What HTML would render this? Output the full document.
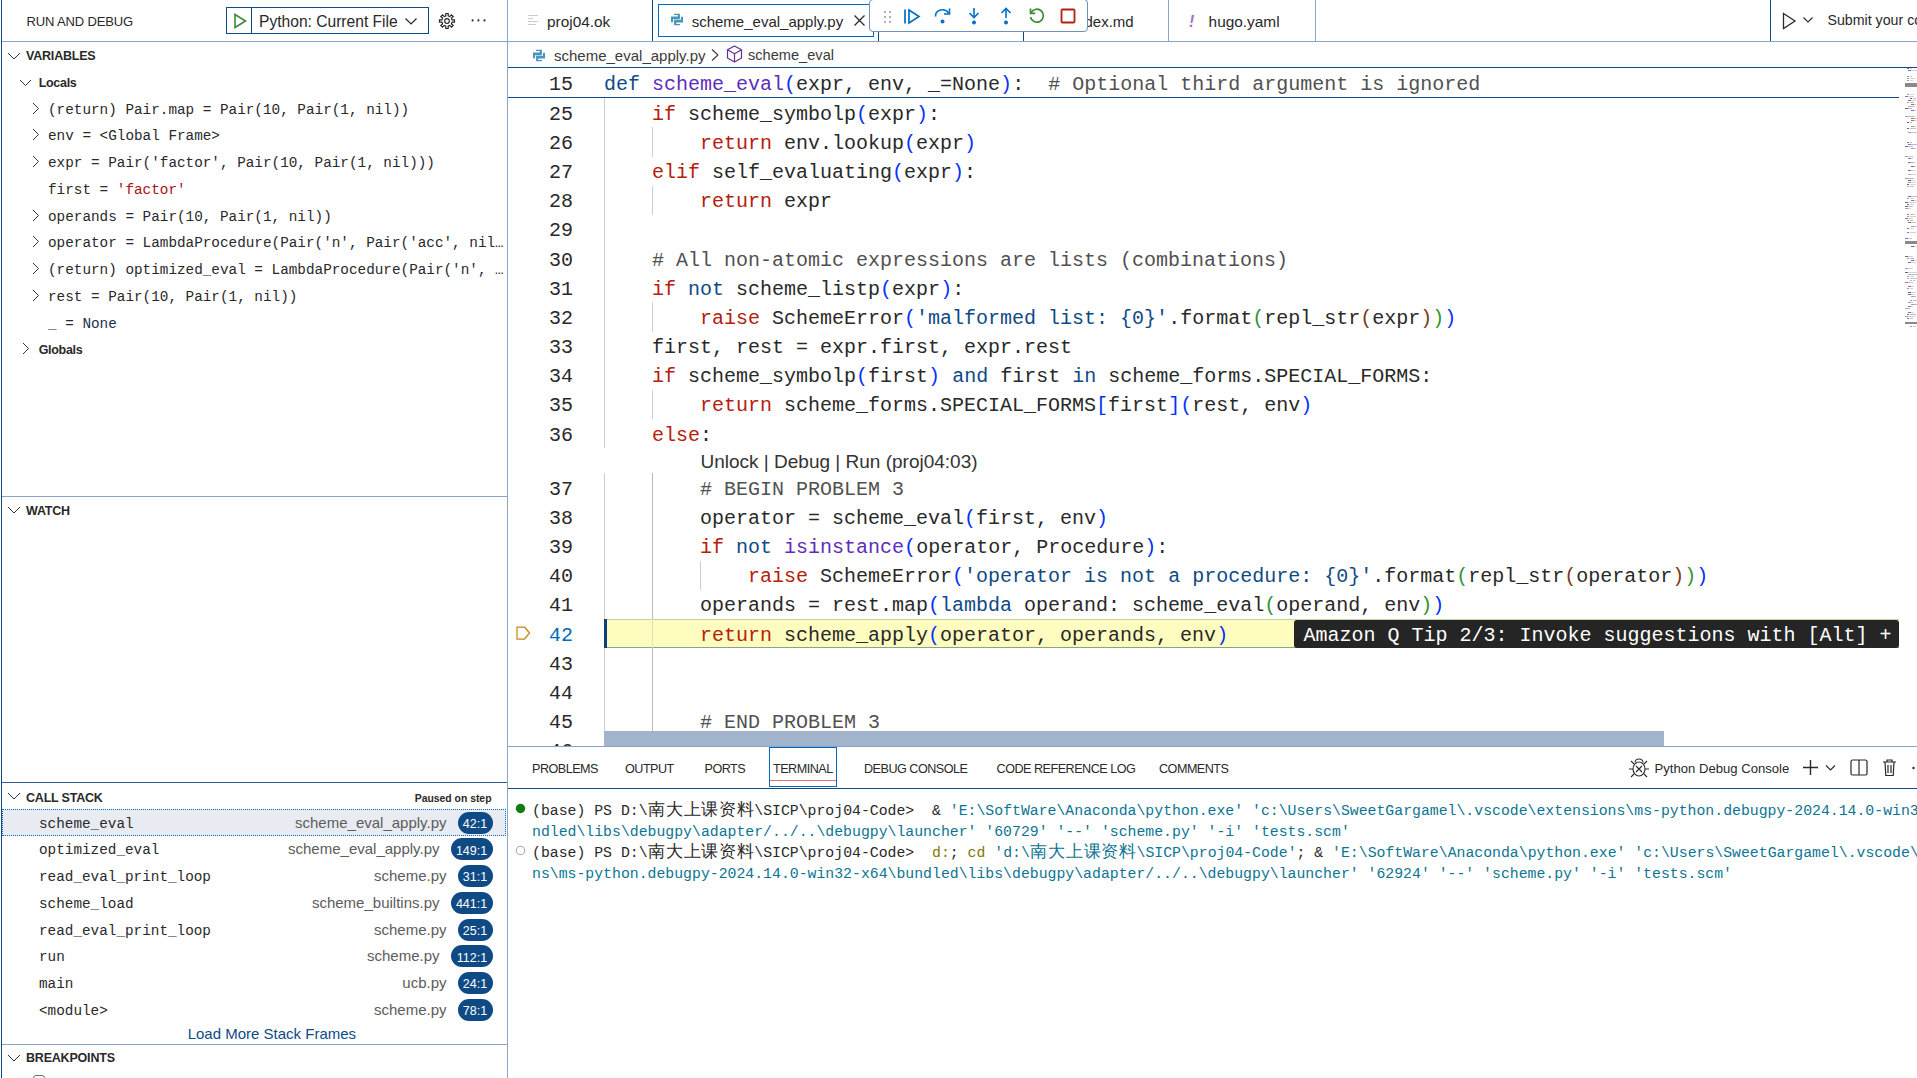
<!DOCTYPE html><html><head><meta charset="utf-8"><style>
html,body{margin:0;padding:0;}
body{width:1917px;height:1078px;overflow:hidden;position:relative;background:#fff;}
.r{position:absolute;}
.t{position:absolute;white-space:pre;}
.s{font-family:"Liberation Sans",sans-serif;}
.m{font-family:"Liberation Mono",monospace;}
</style></head><body>
<div class="r" style="left:1px;top:0px;width:1px;height:1078px;background:#0f4a85;"></div>
<div class="r" style="left:507px;top:0px;width:1px;height:1078px;background:#8aa6c4;"></div>
<div class="r" style="left:2px;top:41px;width:505px;height:1px;background:#8aa6c4;"></div>
<div class="t s" style="top:14.00px;font-size:13px;line-height:15.00px;color:#292929;left:26.50px;letter-spacing:-0.15px;">RUN AND DEBUG</div>
<div class="r" style="left:226px;top:7px;width:203px;height:27px;box-sizing:border-box;border:1px solid #0f4a85;"></div>
<div class="r" style="left:251px;top:8px;width:1px;height:25px;background:#0f4a85;"></div>
<svg class="r" style="left:232px;top:13px;" width="16" height="16" viewBox="0 0 16 16"><path d="M3 1.5 L13.5 8 L3 14.5 Z" fill="none" stroke="#388a34" stroke-width="1.6" stroke-linejoin="miter"/></svg>
<div class="t s" style="top:12.70px;font-size:15.6px;line-height:17.00px;color:#292929;left:259.00px;letter-spacing:0px;">Python: Current File</div>
<svg class="r" style="left:403px;top:13px;" width="16" height="16" viewBox="0 0 16 16"><path d="M2.5 5.5 L8 11 L13.5 5.5" fill="none" stroke="#292929" stroke-width="1.2"/></svg>
<svg class="r" style="left:438.2px;top:11.6px;" width="18" height="18" viewBox="0 0 18 18"><g transform="translate(9,9)" fill="none" stroke="#292929" stroke-width="1.2"><path d="M5.07 -1.13 L7.50 -1.21 L7.50 1.21 L5.07 1.13 L4.39 2.79 L6.16 4.45 L4.45 6.16 L2.79 4.39 L1.13 5.07 L1.21 7.50 L-1.21 7.50 L-1.13 5.07 L-2.79 4.39 L-4.45 6.16 L-6.16 4.45 L-4.39 2.79 L-5.07 1.13 L-7.50 1.21 L-7.50 -1.21 L-5.07 -1.13 L-4.39 -2.79 L-6.16 -4.45 L-4.45 -6.16 L-2.79 -4.39 L-1.13 -5.07 L-1.21 -7.50 L1.21 -7.50 L1.13 -5.07 L2.79 -4.39 L4.45 -6.16 L6.16 -4.45 L4.39 -2.79 Z"/><circle r="2.3"/></g></svg>
<svg class="r" style="left:468px;top:17px;" width="20" height="8" viewBox="0 0 20 8"><circle cx="4.6" cy="3.4" r="1.05" fill="#292929"/><circle cx="10.4" cy="3.4" r="1.05" fill="#292929"/><circle cx="16.5" cy="3.4" r="1.05" fill="#292929"/></svg>
<svg class="r" style="left:7px;top:52.3px;" width="14" height="9" viewBox="0 0 14 9"><path d="M1 1 L7.0 7.0 L13 1" fill="none" stroke="#333333" stroke-width="1.0"/></svg>
<div class="t s" style="top:49.10px;font-size:12.5px;line-height:14.00px;color:#292929;left:26.00px;font-weight:700;letter-spacing:-0.2px;">VARIABLES</div>
<svg class="r" style="left:19px;top:79.2px;" width="13" height="8" viewBox="0 0 13 8"><path d="M1 1 L6.5 6.5 L12 1" fill="none" stroke="#333333" stroke-width="1.0"/></svg>
<div class="t s" style="top:75.85px;font-size:12.5px;line-height:14.00px;color:#292929;left:38.70px;font-weight:700;letter-spacing:-0.3px;">Locals</div>
<svg class="r" style="left:31.8px;top:101.6px;" width="8" height="13" viewBox="0 0 8 13"><path d="M1 1 L6.5 6.5 L1 12" fill="none" stroke="#333333" stroke-width="1.0"/></svg>
<div class="t m" style="top:101.60px;font-size:14.33px;line-height:16.00px;color:#292929;left:48.00px;"><span style="color:#292929">(return) Pair.map = Pair(10, Pair(1, nil))</span></div>
<svg class="r" style="left:31.8px;top:128.35px;" width="8" height="13" viewBox="0 0 8 13"><path d="M1 1 L6.5 6.5 L1 12" fill="none" stroke="#333333" stroke-width="1.0"/></svg>
<div class="t m" style="top:128.35px;font-size:14.33px;line-height:16.00px;color:#292929;left:48.00px;"><span style="color:#292929">env = &lt;Global Frame&gt;</span></div>
<svg class="r" style="left:31.8px;top:155.1px;" width="8" height="13" viewBox="0 0 8 13"><path d="M1 1 L6.5 6.5 L1 12" fill="none" stroke="#333333" stroke-width="1.0"/></svg>
<div class="t m" style="top:155.10px;font-size:14.33px;line-height:16.00px;color:#292929;left:48.00px;"><span style="color:#292929">expr = Pair('factor', Pair(10, Pair(1, nil)))</span></div>
<div class="t m" style="top:181.85px;font-size:14.33px;line-height:16.00px;color:#292929;left:48.00px;"><span style="color:#292929">first = </span><span style="color:#a31515">'factor'</span></div>
<svg class="r" style="left:31.8px;top:208.6px;" width="8" height="13" viewBox="0 0 8 13"><path d="M1 1 L6.5 6.5 L1 12" fill="none" stroke="#333333" stroke-width="1.0"/></svg>
<div class="t m" style="top:208.60px;font-size:14.33px;line-height:16.00px;color:#292929;left:48.00px;"><span style="color:#292929">operands = Pair(10, Pair(1, nil))</span></div>
<svg class="r" style="left:31.8px;top:235.35px;" width="8" height="13" viewBox="0 0 8 13"><path d="M1 1 L6.5 6.5 L1 12" fill="none" stroke="#333333" stroke-width="1.0"/></svg>
<div class="t m" style="top:235.35px;font-size:14.33px;line-height:16.00px;color:#292929;left:48.00px;"><span style="color:#292929">operator = LambdaProcedure(Pair('n', Pair('acc', nil…</span></div>
<svg class="r" style="left:31.8px;top:262.1px;" width="8" height="13" viewBox="0 0 8 13"><path d="M1 1 L6.5 6.5 L1 12" fill="none" stroke="#333333" stroke-width="1.0"/></svg>
<div class="t m" style="top:262.10px;font-size:14.33px;line-height:16.00px;color:#292929;left:48.00px;"><span style="color:#292929">(return) optimized_eval = LambdaProcedure(Pair('n', …</span></div>
<svg class="r" style="left:31.8px;top:288.85px;" width="8" height="13" viewBox="0 0 8 13"><path d="M1 1 L6.5 6.5 L1 12" fill="none" stroke="#333333" stroke-width="1.0"/></svg>
<div class="t m" style="top:288.85px;font-size:14.33px;line-height:16.00px;color:#292929;left:48.00px;"><span style="color:#292929">rest = Pair(10, Pair(1, nil))</span></div>
<div class="t m" style="top:315.60px;font-size:14.33px;line-height:16.00px;color:#292929;left:48.00px;"><span style="color:#292929">_ = </span><span style="color:#1c2f4d">None</span></div>
<svg class="r" style="left:21.5px;top:342.35px;" width="8" height="13" viewBox="0 0 8 13"><path d="M1 1 L6.5 6.5 L1 12" fill="none" stroke="#333333" stroke-width="1.0"/></svg>
<div class="t s" style="top:343.35px;font-size:12.5px;line-height:14.00px;color:#292929;left:38.70px;font-weight:700;letter-spacing:-0.3px;">Globals</div>
<div class="r" style="left:2px;top:496px;width:505px;height:1px;background:#8aa6c4;"></div>
<svg class="r" style="left:7px;top:506.4px;" width="14" height="9" viewBox="0 0 14 9"><path d="M1 1 L7.0 7.0 L13 1" fill="none" stroke="#333333" stroke-width="1.0"/></svg>
<div class="t s" style="top:503.70px;font-size:12.5px;line-height:14.00px;color:#292929;left:26.00px;font-weight:700;letter-spacing:-0.2px;">WATCH</div>
<div class="r" style="left:2px;top:782px;width:505px;height:1px;background:#2f5d94;"></div>
<svg class="r" style="left:7px;top:792.3px;" width="14" height="9" viewBox="0 0 14 9"><path d="M1 1 L7.0 7.0 L13 1" fill="none" stroke="#333333" stroke-width="1.0"/></svg>
<div class="t s" style="top:791.00px;font-size:12.5px;line-height:14.00px;color:#292929;left:26.00px;font-weight:700;letter-spacing:-0.2px;">CALL STACK</div>
<div class="t s" style="top:793.00px;font-size:10.4px;line-height:11.00px;color:#292929;right:1425.50px;font-weight:700;">Paused on step</div>
<div class="r" style="left:2px;top:809px;width:504px;height:27px;background:#e8ecf2;box-sizing:border-box;border:1px dotted #006bbd;"></div>
<div class="t m" style="top:815.50px;font-size:14.33px;line-height:16.00px;color:#292929;left:39.00px;">scheme_eval</div>
<div class="t s" style="top:813.50px;font-size:15px;line-height:17.00px;color:#5c5c5c;right:1470.50px;">scheme_eval_apply.py</div>
<div class="r" style="left:457.5px;top:811.50px;width:35px;height:22px;border-radius:11px;background:#0f4a85;"></div>
<div class="t s" style="top:816.80px;font-size:12.5px;line-height:14.00px;color:#ffffff;right:1429.85px;">42:1</div>
<div class="t m" style="top:842.25px;font-size:14.33px;line-height:16.00px;color:#292929;left:39.00px;">optimized_eval</div>
<div class="t s" style="top:840.25px;font-size:15px;line-height:17.00px;color:#5c5c5c;right:1477.50px;">scheme_eval_apply.py</div>
<div class="r" style="left:450.5px;top:838.25px;width:42px;height:22px;border-radius:11px;background:#0f4a85;"></div>
<div class="t s" style="top:843.55px;font-size:12.5px;line-height:14.00px;color:#ffffff;right:1429.85px;">149:1</div>
<div class="t m" style="top:869.00px;font-size:14.33px;line-height:16.00px;color:#292929;left:39.00px;">read_eval_print_loop</div>
<div class="t s" style="top:867.00px;font-size:15px;line-height:17.00px;color:#5c5c5c;right:1470.50px;">scheme.py</div>
<div class="r" style="left:457.5px;top:865.00px;width:35px;height:22px;border-radius:11px;background:#0f4a85;"></div>
<div class="t s" style="top:870.30px;font-size:12.5px;line-height:14.00px;color:#ffffff;right:1429.85px;">31:1</div>
<div class="t m" style="top:895.75px;font-size:14.33px;line-height:16.00px;color:#292929;left:39.00px;">scheme_load</div>
<div class="t s" style="top:893.75px;font-size:15px;line-height:17.00px;color:#5c5c5c;right:1477.50px;">scheme_builtins.py</div>
<div class="r" style="left:450.5px;top:891.75px;width:42px;height:22px;border-radius:11px;background:#0f4a85;"></div>
<div class="t s" style="top:897.05px;font-size:12.5px;line-height:14.00px;color:#ffffff;right:1429.85px;">441:1</div>
<div class="t m" style="top:922.50px;font-size:14.33px;line-height:16.00px;color:#292929;left:39.00px;">read_eval_print_loop</div>
<div class="t s" style="top:920.50px;font-size:15px;line-height:17.00px;color:#5c5c5c;right:1470.50px;">scheme.py</div>
<div class="r" style="left:457.5px;top:918.50px;width:35px;height:22px;border-radius:11px;background:#0f4a85;"></div>
<div class="t s" style="top:923.80px;font-size:12.5px;line-height:14.00px;color:#ffffff;right:1429.85px;">25:1</div>
<div class="t m" style="top:949.25px;font-size:14.33px;line-height:16.00px;color:#292929;left:39.00px;">run</div>
<div class="t s" style="top:947.25px;font-size:15px;line-height:17.00px;color:#5c5c5c;right:1477.50px;">scheme.py</div>
<div class="r" style="left:450.5px;top:945.25px;width:42px;height:22px;border-radius:11px;background:#0f4a85;"></div>
<div class="t s" style="top:950.55px;font-size:12.5px;line-height:14.00px;color:#ffffff;right:1429.85px;">112:1</div>
<div class="t m" style="top:976.00px;font-size:14.33px;line-height:16.00px;color:#292929;left:39.00px;">main</div>
<div class="t s" style="top:974.00px;font-size:15px;line-height:17.00px;color:#5c5c5c;right:1470.50px;">ucb.py</div>
<div class="r" style="left:457.5px;top:972.00px;width:35px;height:22px;border-radius:11px;background:#0f4a85;"></div>
<div class="t s" style="top:977.30px;font-size:12.5px;line-height:14.00px;color:#ffffff;right:1429.85px;">24:1</div>
<div class="t m" style="top:1002.75px;font-size:14.33px;line-height:16.00px;color:#292929;left:39.00px;">&lt;module&gt;</div>
<div class="t s" style="top:1000.75px;font-size:15px;line-height:17.00px;color:#5c5c5c;right:1470.50px;">scheme.py</div>
<div class="r" style="left:457.5px;top:998.75px;width:35px;height:22px;border-radius:11px;background:#0f4a85;"></div>
<div class="t s" style="top:1004.05px;font-size:12.5px;line-height:14.00px;color:#ffffff;right:1429.85px;">78:1</div>
<div class="t s" style="top:1024.80px;font-size:15px;line-height:17.00px;color:#0f4a85;left:187.70px;">Load More Stack Frames</div>
<div class="r" style="left:2px;top:1044px;width:505px;height:1px;background:#8aa6c4;"></div>
<svg class="r" style="left:7px;top:1054.4px;" width="14" height="9" viewBox="0 0 14 9"><path d="M1 1 L7.0 7.0 L13 1" fill="none" stroke="#333333" stroke-width="1.0"/></svg>
<div class="t s" style="top:1051.00px;font-size:12.5px;line-height:14.00px;color:#292929;left:26.00px;font-weight:700;letter-spacing:-0.2px;">BREAKPOINTS</div>
<div class="r" style="left:33px;top:1075px;width:12px;height:12px;box-sizing:border-box;border:1px solid #6f6f6f;border-radius:3px;"></div>
<div class="r" style="left:508px;top:41px;width:1409px;height:1px;background:#8aa6c4;"></div>
<div class="r" style="left:652px;top:0px;width:1px;height:41px;background:#0f4a85;"></div>
<div class="r" style="left:878px;top:0px;width:1px;height:41px;background:#0f4a85;"></div>
<div class="r" style="left:1023px;top:0px;width:1px;height:41px;background:#0f4a85;"></div>
<div class="r" style="left:1168px;top:0px;width:1px;height:41px;background:#8aa6c4;"></div>
<div class="r" style="left:1315px;top:0px;width:1px;height:41px;background:#8aa6c4;"></div>
<div class="r" style="left:1770px;top:0px;width:1px;height:41px;background:#0f4a85;"></div>
<svg class="r" style="left:527px;top:14px;" width="12" height="12" viewBox="0 0 12 12"><g stroke="#c9cdd1" stroke-width="1"><path d="M1 1.5H11"/><path d="M1 4.5H6"/><path d="M1 7.5H11"/><path d="M1 10.5H9"/></g></svg>
<div class="t s" style="top:12.50px;font-size:15.4px;line-height:17.00px;color:#292929;left:547.00px;">proj04.ok</div>
<div class="r" style="left:658px;top:4px;width:216px;height:33px;box-sizing:border-box;border:1px solid #006bbd;"></div>
<svg class="r" style="left:670.9px;top:13.3px;" width="13" height="14" viewBox="0 0 13 14"><g fill="#4b94ba"><path d="M3 0.7H8.9V6.25H2V9.35H0V3.56H6.7V2H3Z"/><path d="M9 12.3H3.1V6.75H10V3.65H12V9.44H5.3V11H9Z"/></g></svg>
<div class="t s" style="top:12.50px;font-size:15px;line-height:17.00px;color:#292929;left:691.70px;">scheme_eval_apply.py</div>
<svg class="r" style="left:853px;top:14px;" width="13" height="13" viewBox="0 0 13 13"><path d="M1.5 1.5L11.5 11.5M11.5 1.5L1.5 11.5" stroke="#292929" stroke-width="1.3"/></svg>
<div class="t s" style="top:12.50px;font-size:15px;line-height:17.00px;color:#292929;left:1064.50px;">_index.md</div>
<div class="t s" style="top:12.50px;font-size:16px;line-height:17.00px;color:#a074c4;left:1189.00px;font-style:italic;font-weight:700;">!</div>
<div class="t s" style="top:12.50px;font-size:15.4px;line-height:17.00px;color:#292929;left:1208.60px;">hugo.yaml</div>
<svg class="r" style="left:1781px;top:12px;" width="16" height="18" viewBox="0 0 16 18"><path d="M2.5 1.5L14 9L2.5 16.5Z" fill="none" stroke="#292929" stroke-width="1.3"/></svg>
<svg class="r" style="left:1802px;top:16px;" width="12" height="8" viewBox="0 0 12 8"><path d="M1.5 1.5L6 6L10.5 1.5" fill="none" stroke="#292929" stroke-width="1.1"/></svg>
<div class="t s" style="top:11.80px;font-size:14.2px;line-height:16.00px;color:#292929;left:1827.50px;">Submit your code</div>
<svg class="r" style="left:532.6px;top:48.8px;" width="13" height="14" viewBox="0 0 13 14"><g fill="#4b94ba"><path d="M3 0.7H8.9V6.25H2V9.35H0V3.56H6.7V2H3Z"/><path d="M9 12.3H3.1V6.75H10V3.65H12V9.44H5.3V11H9Z"/></g></svg>
<div class="t s" style="top:46.50px;font-size:15px;line-height:17.00px;color:#3b3b3b;left:554.00px;">scheme_eval_apply.py</div>
<svg class="r" style="left:710px;top:48px;" width="10" height="14" viewBox="0 0 10 14"><path d="M2 1.5L8 7L2 12.5" fill="none" stroke="#3b3b3b" stroke-width="1.1"/></svg>
<svg class="r" style="left:726px;top:45px;" width="17" height="18" viewBox="0 0 17 18"><g fill="none" stroke="#652d90" stroke-width="1.2" stroke-linejoin="round"><path d="M8.5 1L15.5 4.8V13L8.5 17L1.5 13V4.8Z"/><path d="M1.5 4.8L8.5 8.8L15.5 4.8M8.5 8.8V17"/></g></svg>
<div class="t s" style="top:47.40px;font-size:14.6px;line-height:16.00px;color:#3b3b3b;left:748.00px;">scheme_eval</div>
<div class="r" style="left:508px;top:67px;width:1409px;height:1px;background:#0f4a85;"></div>
<div class="r" style="left:508px;top:97px;width:1391px;height:1px;background:#0f4a85;"></div>
<div class="t m" style="top:73.00px;font-size:20.0px;line-height:23.00px;color:#292929;right:1344.00px;">15</div>
<div class="t m" style="top:73.00px;font-size:20.0px;line-height:23.00px;color:#292929;left:604.00px;"><span style="color:#0f4a85">def </span><span style="color:#5e2cbc">scheme_eval</span><span style="color:#0431fa">(</span>expr, env, _=None<span style="color:#0431fa">)</span>:  <span style="color:#515151"># Optional third argument is ignored</span></div>
<div class="r" style="left:0;top:98px;width:1917px;height:648px;overflow:hidden;">
<div class="r" style="left:604px;top:520.83px;width:1295px;height:29.17px;background:#fffcc0;box-sizing:border-box;border-top:1px solid #c5d2a8;border-bottom:1px solid #8aa67e;"></div>
<div class="r" style="left:604.0px;top:0.00px;width:1px;height:29.67px;background:#cfcfcf;"></div>
<div class="t m" style="right:1344.00px;top:4.80px;font-size:20.0px;line-height:23.00px;color:#292929;">25</div>
<div class="t m" style="left:604.00px;top:4.80px;font-size:20.0px;line-height:23.00px;color:#292929;">    <span style="color:#b5200d">if</span> scheme_symbolp<span style="color:#0431fa">(</span>expr<span style="color:#0431fa">)</span>:</div>
<div class="r" style="left:604.0px;top:29.17px;width:1px;height:29.67px;background:#cfcfcf;"></div>
<div class="r" style="left:652.0px;top:29.17px;width:1px;height:29.67px;background:#cfcfcf;"></div>
<div class="t m" style="right:1344.00px;top:33.97px;font-size:20.0px;line-height:23.00px;color:#292929;">26</div>
<div class="t m" style="left:604.00px;top:33.97px;font-size:20.0px;line-height:23.00px;color:#292929;">        <span style="color:#b5200d">return</span> env.lookup<span style="color:#0431fa">(</span>expr<span style="color:#0431fa">)</span></div>
<div class="r" style="left:604.0px;top:58.33px;width:1px;height:29.67px;background:#cfcfcf;"></div>
<div class="t m" style="right:1344.00px;top:63.13px;font-size:20.0px;line-height:23.00px;color:#292929;">27</div>
<div class="t m" style="left:604.00px;top:63.13px;font-size:20.0px;line-height:23.00px;color:#292929;">    <span style="color:#b5200d">elif</span> self_evaluating<span style="color:#0431fa">(</span>expr<span style="color:#0431fa">)</span>:</div>
<div class="r" style="left:604.0px;top:87.50px;width:1px;height:29.67px;background:#cfcfcf;"></div>
<div class="r" style="left:652.0px;top:87.50px;width:1px;height:29.67px;background:#cfcfcf;"></div>
<div class="t m" style="right:1344.00px;top:92.30px;font-size:20.0px;line-height:23.00px;color:#292929;">28</div>
<div class="t m" style="left:604.00px;top:92.30px;font-size:20.0px;line-height:23.00px;color:#292929;">        <span style="color:#b5200d">return</span> expr</div>
<div class="r" style="left:604.0px;top:116.67px;width:1px;height:29.67px;background:#cfcfcf;"></div>
<div class="t m" style="right:1344.00px;top:121.47px;font-size:20.0px;line-height:23.00px;color:#292929;">29</div>
<div class="r" style="left:604.0px;top:145.83px;width:1px;height:29.67px;background:#cfcfcf;"></div>
<div class="t m" style="right:1344.00px;top:150.63px;font-size:20.0px;line-height:23.00px;color:#292929;">30</div>
<div class="t m" style="left:604.00px;top:150.63px;font-size:20.0px;line-height:23.00px;color:#292929;">    <span style="color:#515151"># All non-atomic expressions are lists (combinations)</span></div>
<div class="r" style="left:604.0px;top:175.00px;width:1px;height:29.67px;background:#cfcfcf;"></div>
<div class="t m" style="right:1344.00px;top:179.80px;font-size:20.0px;line-height:23.00px;color:#292929;">31</div>
<div class="t m" style="left:604.00px;top:179.80px;font-size:20.0px;line-height:23.00px;color:#292929;">    <span style="color:#b5200d">if</span> <span style="color:#0f4a85">not</span> scheme_listp<span style="color:#0431fa">(</span>expr<span style="color:#0431fa">)</span>:</div>
<div class="r" style="left:604.0px;top:204.17px;width:1px;height:29.67px;background:#cfcfcf;"></div>
<div class="r" style="left:652.0px;top:204.17px;width:1px;height:29.67px;background:#cfcfcf;"></div>
<div class="t m" style="right:1344.00px;top:208.97px;font-size:20.0px;line-height:23.00px;color:#292929;">32</div>
<div class="t m" style="left:604.00px;top:208.97px;font-size:20.0px;line-height:23.00px;color:#292929;">        <span style="color:#b5200d">raise</span> SchemeError<span style="color:#0431fa">(</span><span style="color:#0f4a85">'malformed list: {0}'</span>.format<span style="color:#319331">(</span>repl_str<span style="color:#7b3814">(</span>expr<span style="color:#7b3814">)</span><span style="color:#319331">)</span><span style="color:#0431fa">)</span></div>
<div class="r" style="left:604.0px;top:233.33px;width:1px;height:29.67px;background:#cfcfcf;"></div>
<div class="t m" style="right:1344.00px;top:238.13px;font-size:20.0px;line-height:23.00px;color:#292929;">33</div>
<div class="t m" style="left:604.00px;top:238.13px;font-size:20.0px;line-height:23.00px;color:#292929;">    first, rest = expr.first, expr.rest</div>
<div class="r" style="left:604.0px;top:262.50px;width:1px;height:29.67px;background:#cfcfcf;"></div>
<div class="t m" style="right:1344.00px;top:267.30px;font-size:20.0px;line-height:23.00px;color:#292929;">34</div>
<div class="t m" style="left:604.00px;top:267.30px;font-size:20.0px;line-height:23.00px;color:#292929;">    <span style="color:#b5200d">if</span> scheme_symbolp<span style="color:#0431fa">(</span>first<span style="color:#0431fa">)</span> <span style="color:#0f4a85">and</span> first <span style="color:#0f4a85">in</span> scheme_forms.SPECIAL_FORMS:</div>
<div class="r" style="left:604.0px;top:291.67px;width:1px;height:29.67px;background:#cfcfcf;"></div>
<div class="r" style="left:652.0px;top:291.67px;width:1px;height:29.67px;background:#cfcfcf;"></div>
<div class="t m" style="right:1344.00px;top:296.47px;font-size:20.0px;line-height:23.00px;color:#292929;">35</div>
<div class="t m" style="left:604.00px;top:296.47px;font-size:20.0px;line-height:23.00px;color:#292929;">        <span style="color:#b5200d">return</span> scheme_forms.SPECIAL_FORMS<span style="color:#0431fa">[</span>first<span style="color:#0431fa">]</span><span style="color:#0431fa">(</span>rest, env<span style="color:#0431fa">)</span></div>
<div class="r" style="left:604.0px;top:320.83px;width:1px;height:29.67px;background:#cfcfcf;"></div>
<div class="t m" style="right:1344.00px;top:325.63px;font-size:20.0px;line-height:23.00px;color:#292929;">36</div>
<div class="t m" style="left:604.00px;top:325.63px;font-size:20.0px;line-height:23.00px;color:#292929;">    <span style="color:#b5200d">else</span>:</div>
<div class="r" style="left:604.0px;top:375.00px;width:1px;height:29.67px;background:#cfcfcf;"></div>
<div class="r" style="left:652.0px;top:375.00px;width:1px;height:29.67px;background:#b8b8b8;"></div>
<div class="t m" style="right:1344.00px;top:379.80px;font-size:20.0px;line-height:23.00px;color:#292929;">37</div>
<div class="t m" style="left:604.00px;top:379.80px;font-size:20.0px;line-height:23.00px;color:#292929;">        <span style="color:#515151"># BEGIN PROBLEM 3</span></div>
<div class="r" style="left:604.0px;top:404.17px;width:1px;height:29.67px;background:#cfcfcf;"></div>
<div class="r" style="left:652.0px;top:404.17px;width:1px;height:29.67px;background:#b8b8b8;"></div>
<div class="t m" style="right:1344.00px;top:408.97px;font-size:20.0px;line-height:23.00px;color:#292929;">38</div>
<div class="t m" style="left:604.00px;top:408.97px;font-size:20.0px;line-height:23.00px;color:#292929;">        operator = scheme_eval<span style="color:#0431fa">(</span>first, env<span style="color:#0431fa">)</span></div>
<div class="r" style="left:604.0px;top:433.33px;width:1px;height:29.67px;background:#cfcfcf;"></div>
<div class="r" style="left:652.0px;top:433.33px;width:1px;height:29.67px;background:#b8b8b8;"></div>
<div class="t m" style="right:1344.00px;top:438.13px;font-size:20.0px;line-height:23.00px;color:#292929;">39</div>
<div class="t m" style="left:604.00px;top:438.13px;font-size:20.0px;line-height:23.00px;color:#292929;">        <span style="color:#b5200d">if</span> <span style="color:#0f4a85">not</span> <span style="color:#5e2cbc">isinstance</span><span style="color:#0431fa">(</span>operator, Procedure<span style="color:#0431fa">)</span>:</div>
<div class="r" style="left:604.0px;top:462.50px;width:1px;height:29.67px;background:#cfcfcf;"></div>
<div class="r" style="left:652.0px;top:462.50px;width:1px;height:29.67px;background:#b8b8b8;"></div>
<div class="r" style="left:700.0px;top:462.50px;width:1px;height:29.67px;background:#cfcfcf;"></div>
<div class="t m" style="right:1344.00px;top:467.30px;font-size:20.0px;line-height:23.00px;color:#292929;">40</div>
<div class="t m" style="left:604.00px;top:467.30px;font-size:20.0px;line-height:23.00px;color:#292929;">            <span style="color:#b5200d">raise</span> SchemeError<span style="color:#0431fa">(</span><span style="color:#0f4a85">'operator is not a procedure: {0}'</span>.format<span style="color:#319331">(</span>repl_str<span style="color:#7b3814">(</span>operator<span style="color:#7b3814">)</span><span style="color:#319331">)</span><span style="color:#0431fa">)</span></div>
<div class="r" style="left:604.0px;top:491.67px;width:1px;height:29.67px;background:#cfcfcf;"></div>
<div class="r" style="left:652.0px;top:491.67px;width:1px;height:29.67px;background:#b8b8b8;"></div>
<div class="t m" style="right:1344.00px;top:496.47px;font-size:20.0px;line-height:23.00px;color:#292929;">41</div>
<div class="t m" style="left:604.00px;top:496.47px;font-size:20.0px;line-height:23.00px;color:#292929;">        operands = rest.map<span style="color:#0431fa">(</span><span style="color:#0f4a85">lambda</span> operand: scheme_eval<span style="color:#319331">(</span>operand, env<span style="color:#319331">)</span><span style="color:#0431fa">)</span></div>
<div class="r" style="left:604.0px;top:520.83px;width:1px;height:29.67px;background:#e6e2b0;"></div>
<div class="r" style="left:652.0px;top:520.83px;width:1px;height:29.67px;background:#e6e2b0;"></div>
<div class="t m" style="right:1344.00px;top:525.63px;font-size:20.0px;line-height:23.00px;color:#006bbd;">42</div>
<div class="t m" style="left:604.00px;top:525.63px;font-size:20.0px;line-height:23.00px;color:#292929;">        <span style="color:#b5200d">return</span> scheme_apply<span style="color:#0431fa">(</span>operator, operands, env<span style="color:#0431fa">)</span></div>
<div class="r" style="left:604.0px;top:550.00px;width:1px;height:29.67px;background:#cfcfcf;"></div>
<div class="r" style="left:652.0px;top:550.00px;width:1px;height:29.67px;background:#b8b8b8;"></div>
<div class="t m" style="right:1344.00px;top:554.80px;font-size:20.0px;line-height:23.00px;color:#292929;">43</div>
<div class="r" style="left:604.0px;top:579.17px;width:1px;height:29.67px;background:#cfcfcf;"></div>
<div class="r" style="left:652.0px;top:579.17px;width:1px;height:29.67px;background:#b8b8b8;"></div>
<div class="t m" style="right:1344.00px;top:583.97px;font-size:20.0px;line-height:23.00px;color:#292929;">44</div>
<div class="r" style="left:604.0px;top:608.33px;width:1px;height:29.67px;background:#cfcfcf;"></div>
<div class="r" style="left:652.0px;top:608.33px;width:1px;height:29.67px;background:#b8b8b8;"></div>
<div class="t m" style="right:1344.00px;top:613.13px;font-size:20.0px;line-height:23.00px;color:#292929;">45</div>
<div class="t m" style="left:604.00px;top:613.13px;font-size:20.0px;line-height:23.00px;color:#292929;">        <span style="color:#515151"># END PROBLEM 3</span></div>
<div class="r" style="left:604.0px;top:637.50px;width:1px;height:29.67px;background:#cfcfcf;"></div>
<div class="r" style="left:652.0px;top:637.50px;width:1px;height:29.67px;background:#b8b8b8;"></div>
<div class="t m" style="right:1344.00px;top:642.30px;font-size:20.0px;line-height:23.00px;color:#292929;">46</div>
<div class="t m" style="left:604.00px;top:642.30px;font-size:20.0px;line-height:23.00px;color:#292929;">        <span style="color:#b5200d">raise</span> SchemeError</div>
<div class="r" style="left:604px;top:520.83px;width:2.5px;height:29.17px;background:#0f3f7a;"></div>
</div>
<div class="t s" style="top:451.20px;font-size:19px;line-height:21.00px;color:#333333;left:700.50px;">Unlock | Debug | Run (proj04:03)</div>
<svg class="r" style="left:514px;top:624px;" width="18" height="18" viewBox="0 0 18 18"><path d="M3 3H10.5L15.5 9L10.5 15H3Z" fill="none" stroke="#c48a12" stroke-width="1.25" stroke-linejoin="round"/></svg>
<div class="r" style="left:1294px;top:620px;width:605px;height:28px;background:#252526;border-radius:3px;"></div>
<div class="t m" style="top:624.00px;font-size:20.0px;line-height:23.00px;color:#ffffff;left:1303.40px;">Amazon Q Tip 2/3: Invoke suggestions with [Alt] +</div>
<div class="r" style="left:604px;top:731px;width:1060px;height:15px;background:#a2b4cb;"></div>
<div class="r" style="left:1906.5px;top:68.0px;width:2.5px;height:1px;background:#0f4a85;opacity:0.7"></div>
<div class="r" style="left:1909.5px;top:68.0px;width:2.4px;height:1px;background:#777777;opacity:0.35"></div>
<div class="r" style="left:1908.0px;top:70.0px;width:2.5px;height:1px;background:#5e2cbc;opacity:0.7"></div>
<div class="r" style="left:1911.0px;top:70.0px;width:5.6px;height:1px;background:#777777;opacity:0.35"></div>
<div class="r" style="left:1906.5px;top:76.0px;width:2.5px;height:1px;background:#777777;opacity:0.7"></div>
<div class="r" style="left:1909.5px;top:76.0px;width:2.3px;height:1px;background:#555555;opacity:0.35"></div>
<div class="r" style="left:1906.5px;top:78.0px;width:2.5px;height:1px;background:#777777;opacity:0.7"></div>
<div class="r" style="left:1909.5px;top:78.0px;width:5.2px;height:1px;background:#777777;opacity:0.35"></div>
<div class="r" style="left:1906.5px;top:80.0px;width:2.5px;height:1px;background:#777777;opacity:0.7"></div>
<div class="r" style="left:1909.5px;top:80.0px;width:3.6px;height:1px;background:#888888;opacity:0.35"></div>
<div class="r" style="left:1906.5px;top:94.0px;width:2.5px;height:1px;background:#777777;opacity:0.7"></div>
<div class="r" style="left:1909.5px;top:94.0px;width:4.0px;height:1px;background:#888888;opacity:0.35"></div>
<div class="r" style="left:1905.0px;top:96.0px;width:2.5px;height:1px;background:#5e2cbc;opacity:0.7"></div>
<div class="r" style="left:1908.0px;top:96.0px;width:6.3px;height:1px;background:#777777;opacity:0.35"></div>
<div class="r" style="left:1909.5px;top:98.0px;width:2.5px;height:1px;background:#292929;opacity:0.7"></div>
<div class="r" style="left:1912.5px;top:98.0px;width:3.2px;height:1px;background:#0f4a85;opacity:0.35"></div>
<div class="r" style="left:1908.0px;top:100.0px;width:2.5px;height:1px;background:#b5200d;opacity:0.7"></div>
<div class="r" style="left:1911.0px;top:100.0px;width:5.2px;height:1px;background:#888888;opacity:0.35"></div>
<div class="r" style="left:1906.5px;top:102.0px;width:2.5px;height:1px;background:#777777;opacity:0.7"></div>
<div class="r" style="left:1909.5px;top:102.0px;width:4.9px;height:1px;background:#0f4a85;opacity:0.35"></div>
<div class="r" style="left:1911.0px;top:104.0px;width:2.5px;height:1px;background:#b5200d;opacity:0.7"></div>
<div class="r" style="left:1914.0px;top:104.0px;width:2.1px;height:1px;background:#777777;opacity:0.35"></div>
<div class="r" style="left:1908.0px;top:106.0px;width:2.5px;height:1px;background:#999999;opacity:0.7"></div>
<div class="r" style="left:1911.0px;top:106.0px;width:3.7px;height:1px;background:#555555;opacity:0.35"></div>
<div class="r" style="left:1905.0px;top:108.0px;width:2.5px;height:1px;background:#292929;opacity:0.7"></div>
<div class="r" style="left:1908.0px;top:108.0px;width:4.4px;height:1px;background:#0f4a85;opacity:0.35"></div>
<div class="r" style="left:1911.0px;top:110.0px;width:2.5px;height:1px;background:#5e2cbc;opacity:0.7"></div>
<div class="r" style="left:1914.0px;top:110.0px;width:2.1px;height:1px;background:#555555;opacity:0.35"></div>
<div class="r" style="left:1905.0px;top:116.0px;width:2.5px;height:1px;background:#777777;opacity:0.7"></div>
<div class="r" style="left:1908.0px;top:116.0px;width:6.5px;height:1px;background:#0f4a85;opacity:0.35"></div>
<div class="r" style="left:1911.0px;top:118.0px;width:2.5px;height:1px;background:#b5200d;opacity:0.7"></div>
<div class="r" style="left:1914.0px;top:118.0px;width:2.9px;height:1px;background:#555555;opacity:0.35"></div>
<div class="r" style="left:1911.0px;top:120.0px;width:2.5px;height:1px;background:#b5200d;opacity:0.7"></div>
<div class="r" style="left:1914.0px;top:120.0px;width:2.6px;height:1px;background:#888888;opacity:0.35"></div>
<div class="r" style="left:1906.5px;top:122.0px;width:2.5px;height:1px;background:#292929;opacity:0.7"></div>
<div class="r" style="left:1909.5px;top:122.0px;width:2.7px;height:1px;background:#0f4a85;opacity:0.35"></div>
<div class="r" style="left:1911.0px;top:126.0px;width:2.5px;height:1px;background:#777777;opacity:0.7"></div>
<div class="r" style="left:1914.0px;top:126.0px;width:2.4px;height:1px;background:#888888;opacity:0.35"></div>
<div class="r" style="left:1906.5px;top:128.0px;width:2.5px;height:1px;background:#292929;opacity:0.7"></div>
<div class="r" style="left:1909.5px;top:128.0px;width:6.8px;height:1px;background:#555555;opacity:0.35"></div>
<div class="r" style="left:1908.0px;top:132.0px;width:2.5px;height:1px;background:#777777;opacity:0.7"></div>
<div class="r" style="left:1911.0px;top:132.0px;width:5.8px;height:1px;background:#555555;opacity:0.35"></div>
<div class="r" style="left:1906.5px;top:142.0px;width:2.5px;height:1px;background:#b5200d;opacity:0.7"></div>
<div class="r" style="left:1909.5px;top:142.0px;width:2.0px;height:1px;background:#0f4a85;opacity:0.35"></div>
<div class="r" style="left:1908.0px;top:144.0px;width:2.5px;height:1px;background:#5e2cbc;opacity:0.7"></div>
<div class="r" style="left:1911.0px;top:144.0px;width:5.8px;height:1px;background:#0f4a85;opacity:0.35"></div>
<div class="r" style="left:1905.0px;top:146.0px;width:2.5px;height:1px;background:#0f4a85;opacity:0.7"></div>
<div class="r" style="left:1908.0px;top:146.0px;width:4.8px;height:1px;background:#555555;opacity:0.35"></div>
<div class="r" style="left:1911.0px;top:148.0px;width:2.5px;height:1px;background:#777777;opacity:0.7"></div>
<div class="r" style="left:1914.0px;top:148.0px;width:2.1px;height:1px;background:#555555;opacity:0.35"></div>
<div class="r" style="left:1905.0px;top:156.0px;width:2.5px;height:1px;background:#777777;opacity:0.7"></div>
<div class="r" style="left:1908.0px;top:156.0px;width:6.0px;height:1px;background:#777777;opacity:0.35"></div>
<div class="r" style="left:1908.0px;top:158.0px;width:2.5px;height:1px;background:#5e2cbc;opacity:0.7"></div>
<div class="r" style="left:1911.0px;top:158.0px;width:2.3px;height:1px;background:#777777;opacity:0.35"></div>
<div class="r" style="left:1908.0px;top:162.0px;width:2.5px;height:1px;background:#b5200d;opacity:0.7"></div>
<div class="r" style="left:1911.0px;top:162.0px;width:3.9px;height:1px;background:#0f4a85;opacity:0.35"></div>
<div class="r" style="left:1911.0px;top:166.0px;width:2.5px;height:1px;background:#0f4a85;opacity:0.7"></div>
<div class="r" style="left:1914.0px;top:166.0px;width:2.3px;height:1px;background:#555555;opacity:0.35"></div>
<div class="r" style="left:1908.0px;top:170.0px;width:2.5px;height:1px;background:#0f4a85;opacity:0.7"></div>
<div class="r" style="left:1911.0px;top:170.0px;width:4.1px;height:1px;background:#888888;opacity:0.35"></div>
<div class="r" style="left:1908.0px;top:174.0px;width:2.5px;height:1px;background:#999999;opacity:0.7"></div>
<div class="r" style="left:1911.0px;top:174.0px;width:5.0px;height:1px;background:#777777;opacity:0.35"></div>
<div class="r" style="left:1905.0px;top:178.0px;width:2.5px;height:1px;background:#777777;opacity:0.7"></div>
<div class="r" style="left:1908.0px;top:178.0px;width:5.6px;height:1px;background:#0f4a85;opacity:0.35"></div>
<div class="r" style="left:1908.0px;top:180.0px;width:2.5px;height:1px;background:#292929;opacity:0.7"></div>
<div class="r" style="left:1911.0px;top:180.0px;width:4.1px;height:1px;background:#888888;opacity:0.35"></div>
<div class="r" style="left:1908.0px;top:182.0px;width:2.5px;height:1px;background:#777777;opacity:0.7"></div>
<div class="r" style="left:1911.0px;top:182.0px;width:4.5px;height:1px;background:#888888;opacity:0.35"></div>
<div class="r" style="left:1906.5px;top:184.0px;width:2.5px;height:1px;background:#292929;opacity:0.7"></div>
<div class="r" style="left:1909.5px;top:184.0px;width:6.5px;height:1px;background:#888888;opacity:0.35"></div>
<div class="r" style="left:1906.5px;top:186.0px;width:2.5px;height:1px;background:#999999;opacity:0.7"></div>
<div class="r" style="left:1909.5px;top:186.0px;width:4.0px;height:1px;background:#555555;opacity:0.35"></div>
<div class="r" style="left:1908.0px;top:196.0px;width:2.5px;height:1px;background:#0f4a85;opacity:0.7"></div>
<div class="r" style="left:1911.0px;top:196.0px;width:5.8px;height:1px;background:#0f4a85;opacity:0.35"></div>
<div class="r" style="left:1906.5px;top:198.0px;width:2.5px;height:1px;background:#777777;opacity:0.7"></div>
<div class="r" style="left:1909.5px;top:198.0px;width:4.6px;height:1px;background:#888888;opacity:0.35"></div>
<div class="r" style="left:1911.0px;top:200.0px;width:2.5px;height:1px;background:#5e2cbc;opacity:0.7"></div>
<div class="r" style="left:1914.0px;top:200.0px;width:2.5px;height:1px;background:#777777;opacity:0.35"></div>
<div class="r" style="left:1905.0px;top:202.0px;width:2.5px;height:1px;background:#292929;opacity:0.7"></div>
<div class="r" style="left:1908.0px;top:202.0px;width:8.4px;height:1px;background:#777777;opacity:0.35"></div>
<div class="r" style="left:1906.5px;top:204.0px;width:2.5px;height:1px;background:#0f4a85;opacity:0.7"></div>
<div class="r" style="left:1909.5px;top:204.0px;width:4.4px;height:1px;background:#888888;opacity:0.35"></div>
<div class="r" style="left:1905.0px;top:206.0px;width:2.5px;height:1px;background:#292929;opacity:0.7"></div>
<div class="r" style="left:1908.0px;top:206.0px;width:5.2px;height:1px;background:#555555;opacity:0.35"></div>
<div class="r" style="left:1905.0px;top:208.0px;width:2.5px;height:1px;background:#777777;opacity:0.7"></div>
<div class="r" style="left:1908.0px;top:208.0px;width:3.2px;height:1px;background:#888888;opacity:0.35"></div>
<div class="r" style="left:1906.5px;top:214.0px;width:2.5px;height:1px;background:#5e2cbc;opacity:0.7"></div>
<div class="r" style="left:1909.5px;top:214.0px;width:5.6px;height:1px;background:#555555;opacity:0.35"></div>
<div class="r" style="left:1906.5px;top:216.0px;width:2.5px;height:1px;background:#777777;opacity:0.7"></div>
<div class="r" style="left:1909.5px;top:216.0px;width:6.4px;height:1px;background:#777777;opacity:0.35"></div>
<div class="r" style="left:1905.0px;top:218.0px;width:2.5px;height:1px;background:#5e2cbc;opacity:0.7"></div>
<div class="r" style="left:1908.0px;top:218.0px;width:5.0px;height:1px;background:#888888;opacity:0.35"></div>
<div class="r" style="left:1906.5px;top:220.0px;width:2.5px;height:1px;background:#777777;opacity:0.7"></div>
<div class="r" style="left:1909.5px;top:220.0px;width:3.2px;height:1px;background:#0f4a85;opacity:0.35"></div>
<div class="r" style="left:1908.0px;top:222.0px;width:2.5px;height:1px;background:#b5200d;opacity:0.7"></div>
<div class="r" style="left:1911.0px;top:222.0px;width:5.3px;height:1px;background:#555555;opacity:0.35"></div>
<div class="r" style="left:1911.0px;top:226.0px;width:2.5px;height:1px;background:#777777;opacity:0.7"></div>
<div class="r" style="left:1914.0px;top:226.0px;width:2.8px;height:1px;background:#555555;opacity:0.35"></div>
<div class="r" style="left:1906.5px;top:228.0px;width:2.5px;height:1px;background:#5e2cbc;opacity:0.7"></div>
<div class="r" style="left:1909.5px;top:228.0px;width:4.9px;height:1px;background:#888888;opacity:0.35"></div>
<div class="r" style="left:1906.5px;top:232.0px;width:2.5px;height:1px;background:#5e2cbc;opacity:0.7"></div>
<div class="r" style="left:1909.5px;top:232.0px;width:6.3px;height:1px;background:#777777;opacity:0.35"></div>
<div class="r" style="left:1905.0px;top:238.0px;width:2.5px;height:1px;background:#5e2cbc;opacity:0.7"></div>
<div class="r" style="left:1908.0px;top:238.0px;width:4.3px;height:1px;background:#777777;opacity:0.35"></div>
<div class="r" style="left:1911.0px;top:246.0px;width:2.5px;height:1px;background:#292929;opacity:0.7"></div>
<div class="r" style="left:1914.0px;top:246.0px;width:2.9px;height:1px;background:#777777;opacity:0.35"></div>
<div class="r" style="left:1905.0px;top:256.0px;width:2.5px;height:1px;background:#292929;opacity:0.7"></div>
<div class="r" style="left:1908.0px;top:256.0px;width:5.1px;height:1px;background:#777777;opacity:0.35"></div>
<div class="r" style="left:1906.5px;top:258.0px;width:2.5px;height:1px;background:#777777;opacity:0.7"></div>
<div class="r" style="left:1909.5px;top:258.0px;width:4.5px;height:1px;background:#0f4a85;opacity:0.35"></div>
<div class="r" style="left:1911.0px;top:260.0px;width:2.5px;height:1px;background:#5e2cbc;opacity:0.7"></div>
<div class="r" style="left:1914.0px;top:260.0px;width:2.7px;height:1px;background:#888888;opacity:0.35"></div>
<div class="r" style="left:1908.0px;top:262.0px;width:2.5px;height:1px;background:#5e2cbc;opacity:0.7"></div>
<div class="r" style="left:1911.0px;top:262.0px;width:5.4px;height:1px;background:#888888;opacity:0.35"></div>
<div class="r" style="left:1905.0px;top:268.0px;width:2.5px;height:1px;background:#777777;opacity:0.7"></div>
<div class="r" style="left:1908.0px;top:268.0px;width:5.0px;height:1px;background:#888888;opacity:0.35"></div>
<div class="r" style="left:1905.0px;top:272.0px;width:2.5px;height:1px;background:#292929;opacity:0.7"></div>
<div class="r" style="left:1908.0px;top:272.0px;width:8.6px;height:1px;background:#888888;opacity:0.35"></div>
<div class="r" style="left:1908.0px;top:274.0px;width:2.5px;height:1px;background:#999999;opacity:0.7"></div>
<div class="r" style="left:1911.0px;top:274.0px;width:5.5px;height:1px;background:#0f4a85;opacity:0.35"></div>
<div class="r" style="left:1906.5px;top:276.0px;width:2.5px;height:1px;background:#777777;opacity:0.7"></div>
<div class="r" style="left:1909.5px;top:276.0px;width:4.2px;height:1px;background:#777777;opacity:0.35"></div>
<div class="r" style="left:1906.5px;top:278.0px;width:2.5px;height:1px;background:#999999;opacity:0.7"></div>
<div class="r" style="left:1909.5px;top:278.0px;width:7.5px;height:1px;background:#555555;opacity:0.35"></div>
<div class="r" style="left:1909.5px;top:280.0px;width:2.5px;height:1px;background:#999999;opacity:0.7"></div>
<div class="r" style="left:1912.5px;top:280.0px;width:2.8px;height:1px;background:#0f4a85;opacity:0.35"></div>
<div class="r" style="left:1905.0px;top:282.0px;width:2.5px;height:1px;background:#b5200d;opacity:0.7"></div>
<div class="r" style="left:1908.0px;top:282.0px;width:5.1px;height:1px;background:#555555;opacity:0.35"></div>
<div class="r" style="left:1908.0px;top:286.0px;width:2.5px;height:1px;background:#5e2cbc;opacity:0.7"></div>
<div class="r" style="left:1911.0px;top:286.0px;width:2.5px;height:1px;background:#777777;opacity:0.35"></div>
<div class="r" style="left:1906.5px;top:288.0px;width:2.5px;height:1px;background:#777777;opacity:0.7"></div>
<div class="r" style="left:1909.5px;top:288.0px;width:3.5px;height:1px;background:#777777;opacity:0.35"></div>
<div class="r" style="left:1908.0px;top:292.0px;width:2.5px;height:1px;background:#292929;opacity:0.7"></div>
<div class="r" style="left:1911.0px;top:292.0px;width:5.3px;height:1px;background:#888888;opacity:0.35"></div>
<div class="r" style="left:1908.0px;top:294.0px;width:2.5px;height:1px;background:#0f4a85;opacity:0.7"></div>
<div class="r" style="left:1911.0px;top:294.0px;width:4.1px;height:1px;background:#888888;opacity:0.35"></div>
<div class="r" style="left:1911.0px;top:296.0px;width:2.5px;height:1px;background:#777777;opacity:0.7"></div>
<div class="r" style="left:1914.0px;top:296.0px;width:2.1px;height:1px;background:#0f4a85;opacity:0.35"></div>
<div class="r" style="left:1909.5px;top:300.0px;width:2.5px;height:1px;background:#777777;opacity:0.7"></div>
<div class="r" style="left:1912.5px;top:300.0px;width:4.3px;height:1px;background:#0f4a85;opacity:0.35"></div>
<div class="r" style="left:1908.0px;top:302.0px;width:2.5px;height:1px;background:#777777;opacity:0.7"></div>
<div class="r" style="left:1911.0px;top:302.0px;width:2.3px;height:1px;background:#888888;opacity:0.35"></div>
<div class="r" style="left:1911.0px;top:304.0px;width:2.5px;height:1px;background:#777777;opacity:0.7"></div>
<div class="r" style="left:1914.0px;top:304.0px;width:3.0px;height:1px;background:#0f4a85;opacity:0.35"></div>
<div class="r" style="left:1908.0px;top:306.0px;width:2.5px;height:1px;background:#5e2cbc;opacity:0.7"></div>
<div class="r" style="left:1911.0px;top:306.0px;width:2.2px;height:1px;background:#888888;opacity:0.35"></div>
<div class="r" style="left:1905.0px;top:308.0px;width:2.5px;height:1px;background:#999999;opacity:0.7"></div>
<div class="r" style="left:1908.0px;top:308.0px;width:2.4px;height:1px;background:#0f4a85;opacity:0.35"></div>
<div class="r" style="left:1908.0px;top:312.0px;width:2.5px;height:1px;background:#5e2cbc;opacity:0.7"></div>
<div class="r" style="left:1911.0px;top:312.0px;width:3.2px;height:1px;background:#888888;opacity:0.35"></div>
<div class="r" style="left:1906.5px;top:314.0px;width:2.5px;height:1px;background:#b5200d;opacity:0.7"></div>
<div class="r" style="left:1909.5px;top:314.0px;width:6.4px;height:1px;background:#0f4a85;opacity:0.35"></div>
<div class="r" style="left:1905.0px;top:316.0px;width:2.5px;height:1px;background:#777777;opacity:0.7"></div>
<div class="r" style="left:1908.0px;top:316.0px;width:7.1px;height:1px;background:#777777;opacity:0.35"></div>
<div class="r" style="left:1906.5px;top:318.0px;width:2.5px;height:1px;background:#5e2cbc;opacity:0.7"></div>
<div class="r" style="left:1909.5px;top:318.0px;width:3.4px;height:1px;background:#555555;opacity:0.35"></div>
<div class="r" style="left:1909.5px;top:326.0px;width:2.5px;height:1px;background:#777777;opacity:0.7"></div>
<div class="r" style="left:1912.5px;top:326.0px;width:3.4px;height:1px;background:#555555;opacity:0.35"></div>
<div class="r" style="left:1905px;top:83px;width:12px;height:4px;background:#8a8a8a;"></div>
<div class="r" style="left:1905px;top:241px;width:12px;height:3px;background:#8a8a8a;"></div>
<div class="r" style="left:1905px;top:321.5px;width:12px;height:2.5px;background:#8a8a8a;"></div>
<div class="r" style="left:869px;top:-1px;width:219px;height:33px;background:#ffffff;box-sizing:border-box;border:1px solid #6f90ba;border-radius:4px;"></div>
<svg class="r" style="left:883px;top:10px;" width="10" height="14" viewBox="0 0 10 14"><g fill="#b0b0b0"><rect x="1" y="1" width="2" height="2"/><rect x="6" y="1" width="2" height="2"/><rect x="1" y="6" width="2" height="2"/><rect x="6" y="6" width="2" height="2"/><rect x="1" y="11" width="2" height="2"/><rect x="6" y="11" width="2" height="2"/></g></svg>
<svg class="r" style="left:902px;top:8px;" width="20" height="18" viewBox="0 0 20 18"><g fill="none" stroke="#0070c8" stroke-width="1.7"><path d="M3 1.5V15.5"/><path d="M7 2L17 8.5L7 15Z" stroke-linejoin="miter"/></g></svg>
<svg class="r" style="left:933px;top:7px;" width="20" height="20" viewBox="0 0 20 20"><g fill="none" stroke="#0070c8" stroke-width="1.6"><path d="M2.5 9.5A7 6.5 0 0 1 15.5 6"/><path d="M16.5 1.5V7H11"/></g><circle cx="9.5" cy="14.5" r="2" fill="#0070c8"/></svg>
<svg class="r" style="left:966px;top:7px;" width="16" height="20" viewBox="0 0 16 20"><g fill="none" stroke="#0070c8" stroke-width="1.6"><path d="M8 1V10"/><path d="M3.5 6L8 10.5L12.5 6"/></g><circle cx="8" cy="15.5" r="2" fill="#0070c8"/></svg>
<svg class="r" style="left:998px;top:7px;" width="16" height="20" viewBox="0 0 16 20"><g fill="none" stroke="#0070c8" stroke-width="1.6"><path d="M8 11V1.5"/><path d="M3.5 6L8 1.5L12.5 6"/></g><circle cx="8" cy="15.5" r="2" fill="#0070c8"/></svg>
<svg class="r" style="left:1028px;top:7px;" width="18" height="18" viewBox="0 0 18 18"><g fill="none" stroke="#388a34" stroke-width="1.7"><path d="M3.2 5.5A6.5 6.5 0 1 1 2.5 10"/><path d="M2.5 1.5V6.3H7.3"/></g></svg>
<svg class="r" style="left:1059px;top:7px;" width="19" height="19" viewBox="0 0 19 19"><rect x="2.5" y="2.5" width="13" height="13" rx="1" fill="none" stroke="#b5200d" stroke-width="1.8"/></svg>
<div class="r" style="left:508px;top:746px;width:1409px;height:1px;background:#8aa6c4;"></div>
<div class="t s" style="top:761.50px;font-size:12.6px;line-height:14.00px;color:#292929;left:532.00px;letter-spacing:-0.5px;">PROBLEMS</div>
<div class="t s" style="top:761.50px;font-size:12.6px;line-height:14.00px;color:#292929;left:625.00px;letter-spacing:-0.5px;">OUTPUT</div>
<div class="t s" style="top:761.50px;font-size:12.6px;line-height:14.00px;color:#292929;left:704.50px;letter-spacing:-0.5px;">PORTS</div>
<div class="t s" style="top:761.50px;font-size:12.6px;line-height:14.00px;color:#292929;left:773.00px;letter-spacing:-0.5px;">TERMINAL</div>
<div class="t s" style="top:761.50px;font-size:12.6px;line-height:14.00px;color:#292929;left:864.00px;letter-spacing:-0.5px;">DEBUG CONSOLE</div>
<div class="t s" style="top:761.50px;font-size:12.6px;line-height:14.00px;color:#292929;left:996.60px;letter-spacing:-0.5px;">CODE REFERENCE LOG</div>
<div class="t s" style="top:761.50px;font-size:12.6px;line-height:14.00px;color:#292929;left:1159.00px;letter-spacing:-0.5px;">COMMENTS</div>
<div class="r" style="left:769px;top:747px;width:68px;height:40px;box-sizing:border-box;border:1px solid #006bbd;"></div>
<div class="r" style="left:770px;top:780px;width:66px;height:1px;background:#e07070;"></div>
<div class="r" style="left:508px;top:788px;width:1409px;height:1px;background:#0f4a85;"></div>
<svg class="r" style="left:1628px;top:757px;" width="22" height="21" viewBox="0 0 22 21"><g fill="none" stroke="#292929" stroke-width="1.1"><ellipse cx="11" cy="12" rx="6" ry="7"/><path d="M7 5.5A4 3.5 0 0 1 15 5.5"/><path d="M8 9L14 15M14 9L8 15"/><path d="M1 12H5M17 12H21M3 4L6 7M19 4L16 7M3 20L6 17M19 20L16 17"/></g></svg>
<div class="t s" style="top:761.00px;font-size:13.1px;line-height:15.00px;color:#292929;left:1654.60px;">Python Debug Console</div>
<svg class="r" style="left:1802px;top:759px;" width="17" height="17" viewBox="0 0 17 17"><path d="M8.5 1V16M1 8.5H16" stroke="#292929" stroke-width="1.4"/></svg>
<svg class="r" style="left:1825px;top:764px;" width="11" height="8" viewBox="0 0 11 8"><path d="M1 1.5L5.5 6L10 1.5" fill="none" stroke="#292929" stroke-width="1.1"/></svg>
<svg class="r" style="left:1850px;top:759px;" width="18" height="17" viewBox="0 0 18 17"><g fill="none" stroke="#292929" stroke-width="1.2"><rect x="1" y="1" width="16" height="15" rx="1.5"/><path d="M9 1V16"/></g></svg>
<svg class="r" style="left:1882px;top:758px;" width="15" height="19" viewBox="0 0 15 19"><g fill="none" stroke="#292929" stroke-width="1.2"><path d="M1 4H14M5 4V2H10V4M3 4L3.8 17.5H11.2L12 4"/><path d="M6 7V15M9 7V15"/></g></svg>
<svg class="r" style="left:1910px;top:764px;" width="7" height="8" viewBox="0 0 7 8"><circle cx="3.5" cy="4" r="1.2" fill="#292929"/></svg>
<svg class="r" style="left:515px;top:803px;" width="11" height="11" viewBox="0 0 11 11"><circle cx="5.5" cy="5.5" r="4.7" fill="#0e7f0e"/></svg>
<div class="t m" style="top:802.50px;font-size:14.825px;line-height:16.00px;color:#292929;left:532.00px;"><span style="color:#292929">(base) PS D:\<span style="display:inline-block;width:17.790px;text-align:center;font-size:16.5px;line-height:1;">南</span><span style="display:inline-block;width:17.790px;text-align:center;font-size:16.5px;line-height:1;">大</span><span style="display:inline-block;width:17.790px;text-align:center;font-size:16.5px;line-height:1;">上</span><span style="display:inline-block;width:17.790px;text-align:center;font-size:16.5px;line-height:1;">课</span><span style="display:inline-block;width:17.790px;text-align:center;font-size:16.5px;line-height:1;">资</span><span style="display:inline-block;width:17.790px;text-align:center;font-size:16.5px;line-height:1;">料</span>\SICP\proj04-Code&gt;  &amp; </span><span style="color:#0c7593">'E:\SoftWare\Anaconda\python.exe' 'c:\Users\SweetGargamel\.vscode\extensions\ms-python.debugpy-2024.14.0-win32-x64\bu</span></div>
<div class="t m" style="top:823.60px;font-size:14.825px;line-height:16.00px;color:#292929;left:532.00px;"><span style="color:#0c7593">ndled\libs\debugpy\adapter/../..\debugpy\launcher' '60729' '--' 'scheme.py' '-i' 'tests.scm'</span></div>
<svg class="r" style="left:515px;top:845px;" width="11" height="11" viewBox="0 0 11 11"><circle cx="5.5" cy="5.5" r="4.2" fill="none" stroke="#a8a8a8" stroke-width="1.1"/></svg>
<div class="t m" style="top:844.60px;font-size:14.825px;line-height:16.00px;color:#292929;left:532.00px;"><span style="color:#292929">(base) PS D:\<span style="display:inline-block;width:17.790px;text-align:center;font-size:16.5px;line-height:1;">南</span><span style="display:inline-block;width:17.790px;text-align:center;font-size:16.5px;line-height:1;">大</span><span style="display:inline-block;width:17.790px;text-align:center;font-size:16.5px;line-height:1;">上</span><span style="display:inline-block;width:17.790px;text-align:center;font-size:16.5px;line-height:1;">课</span><span style="display:inline-block;width:17.790px;text-align:center;font-size:16.5px;line-height:1;">资</span><span style="display:inline-block;width:17.790px;text-align:center;font-size:16.5px;line-height:1;">料</span>\SICP\proj04-Code&gt;  </span><span style="color:#7f7a00">d:</span><span style="color:#292929">; </span><span style="color:#7f7a00">cd</span><span style="color:#0c7593"> 'd:\<span style="display:inline-block;width:17.790px;text-align:center;font-size:16.5px;line-height:1;">南</span><span style="display:inline-block;width:17.790px;text-align:center;font-size:16.5px;line-height:1;">大</span><span style="display:inline-block;width:17.790px;text-align:center;font-size:16.5px;line-height:1;">上</span><span style="display:inline-block;width:17.790px;text-align:center;font-size:16.5px;line-height:1;">课</span><span style="display:inline-block;width:17.790px;text-align:center;font-size:16.5px;line-height:1;">资</span><span style="display:inline-block;width:17.790px;text-align:center;font-size:16.5px;line-height:1;">料</span>\SICP\proj04-Code'</span><span style="color:#292929">; &amp; </span><span style="color:#0c7593">'E:\SoftWare\Anaconda\python.exe' 'c:\Users\SweetGargamel\.vscode\extensio</span></div>
<div class="t m" style="top:866.30px;font-size:14.825px;line-height:16.00px;color:#292929;left:532.00px;"><span style="color:#0c7593">ns\ms-python.debugpy-2024.14.0-win32-x64\bundled\libs\debugpy\adapter/../..\debugpy\launcher' '62924' '--' 'scheme.py' '-i' 'tests.scm'</span></div>
</body></html>
